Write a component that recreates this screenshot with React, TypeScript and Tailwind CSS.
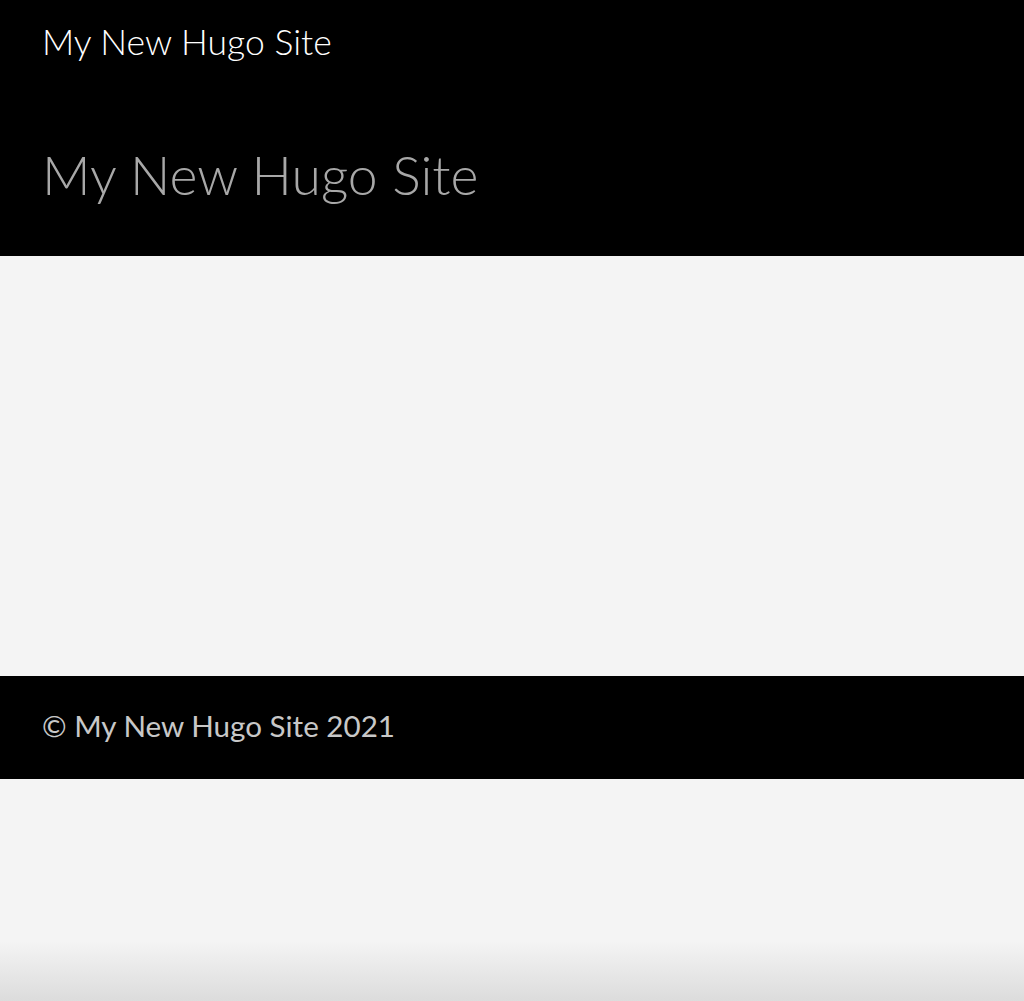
export default function App() {
  return (
    <div className="min-h-[1001px] bg-[#f4f4f4] flex flex-col" style={{ fontFamily: 'Lato, "Open Sans", sans-serif' }}>
      <header className="bg-black h-[256px] flex flex-col px-[42px]">
        <nav className="h-[84px] flex items-center">
          <a className="text-white text-[35.5px] font-light leading-none">My New Hugo Site</a>
        </nav>
        <div className="h-[172px] flex items-center">
          <h1 className="text-[#a8a8a8] text-[53.5px] font-light leading-none mt-[10px]">My New Hugo Site</h1>
        </div>
      </header>
      <main className="h-[420px]" />
      <footer className="bg-black h-[103px] flex items-center px-[42px]">
        <p className="text-[#c8c8c8] text-[29.6px] leading-none -mt-[3px]">© My New Hugo Site 2021</p>
      </footer>
      <div className="flex-1 flex flex-col justify-end">
        <div className="h-[60px] bg-gradient-to-b from-[#f4f4f4] to-[#dcdcdc]" />
      </div>
    </div>
  );
}
